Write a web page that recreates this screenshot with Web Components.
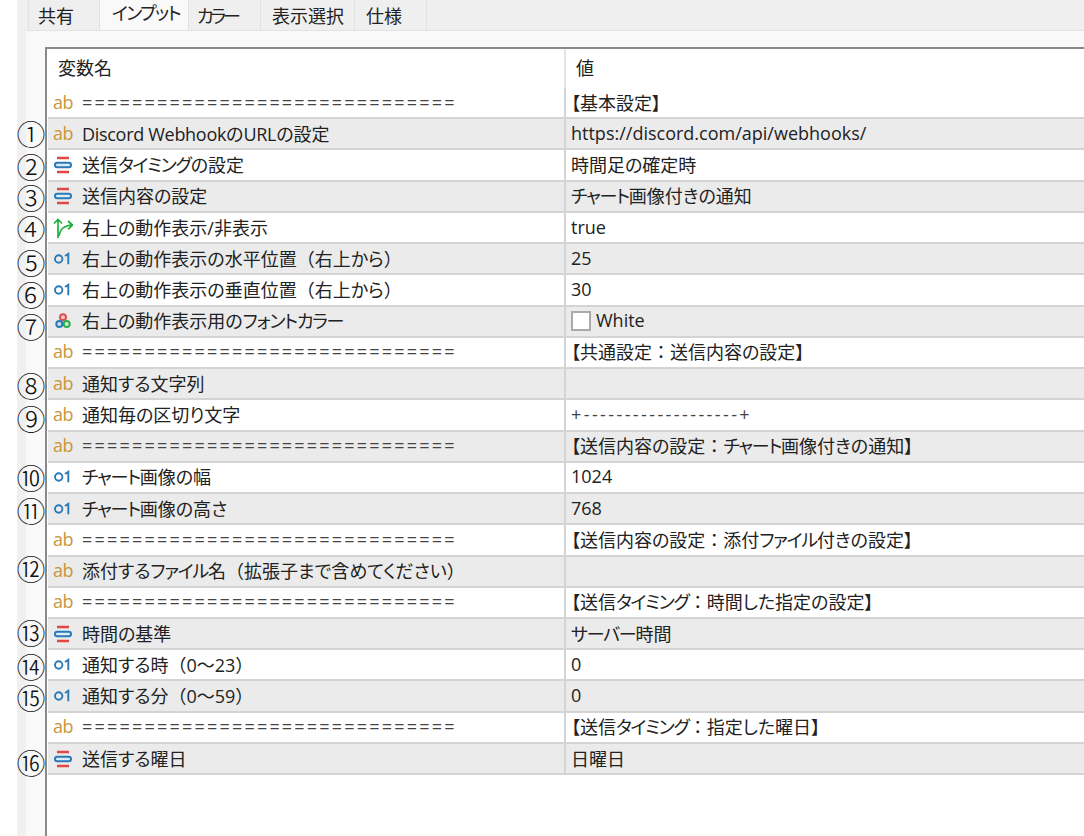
<!DOCTYPE html>
<html>
<head>
<meta charset="utf-8">
<style>
  html, body { margin: 0; padding: 0; background: #fff; }
  body { width: 1084px; height: 836px; overflow: hidden; font-family: "Open Sans", "Noto Sans CJK JP", sans-serif; }
</style>
</head>
<body>
<input-window>
  <input-row type="ab" name="==============================" value="【基本設定】"></input-row>
  <input-row type="ab" mark="①" dy="-1" name="Discord WebhookのURLの設定" value="https://discord.com/api/webhooks/"></input-row>
  <input-row type="enum" mark="②" dy="1" name="送信タイミングの設定" value="時間足の確定時"></input-row>
  <input-row type="enum" mark="③" dy="1" name="送信内容の設定" value="チャート画像付きの通知"></input-row>
  <input-row type="bool" mark="④" dy="1" name="右上の動作表示/非表示" value="true"></input-row>
  <input-row type="num" mark="⑤" dy="3" name="右上の動作表示の水平位置（右上から）" value="25"></input-row>
  <input-row type="num" mark="⑥" dy="4" name="右上の動作表示の垂直位置（右上から）" value="30"></input-row>
  <input-row type="color" mark="⑦" dy="5" name="右上の動作表示用のフォントカラー" value="White" swatch></input-row>
  <input-row type="ab" name="==============================" value="【共通設定：送信内容の設定】"></input-row>
  <input-row type="ab" mark="⑧" dy="1" name="通知する文字列" value=""></input-row>
  <input-row type="ab" mark="⑨" dy="3" name="通知毎の区切り文字" value="+-------------------+"></input-row>
  <input-row type="ab" name="==============================" value="【送信内容の設定：チャート画像付きの通知】"></input-row>
  <input-row type="num" mark="⑩" name="チャート画像の幅" value="1024"></input-row>
  <input-row type="num" mark="⑪" dy="1" name="チャート画像の高さ" value="768"></input-row>
  <input-row type="ab" name="==============================" value="【送信内容の設定：添付ファイル付きの設定】"></input-row>
  <input-row type="ab" mark="⑫" dy="-3" name="添付するファイル名（拡張子まで含めてください）" value=""></input-row>
  <input-row type="ab" name="==============================" value="【送信タイミング：時間した指定の設定】"></input-row>
  <input-row type="enum" mark="⑬" dy="-1" name="時間の基準" value="サーバー時間"></input-row>
  <input-row type="num" mark="⑭" dy="1" name="通知する時（0～23）" value="0"></input-row>
  <input-row type="num" mark="⑮" dy="1" name="通知する分（0～59）" value="0"></input-row>
  <input-row type="ab" name="==============================" value="【送信タイミング：指定した曜日】"></input-row>
  <input-row type="enum" mark="⑯" dy="4" name="送信する曜日" value="日曜日"></input-row>
</input-window>
<script>
const ICONS = {
  ab: `<span class="ab">ab</span>`,
  enum: `<svg width="18" height="18" viewBox="0 0 18 18" fill="none">
    <path d="M3 2h12M3 16h12" stroke="#e04848" stroke-width="2.4"/>
    <rect x="1" y="6.700" width="16" height="4.600" rx="2.300" fill="#dcecf7" stroke="#2a7ab8" stroke-width="2"/></svg>`,
  bool: `<svg width="20" height="20" viewBox="0 0 20 20" fill="none" stroke="#1fae3c" stroke-width="1.700">
    <path d="M5 20V1.500M1 5.500l4-4 4 4"/><path d="M6 18C7 11 11 7.500 19 7M15 3l4.500 4-4.500 4.300"/></svg>`,
  num: `<svg width="18" height="18" viewBox="0 0 18 18" fill="none" stroke="#2a7ab8" stroke-width="1.900">
    <circle cx="4.700" cy="9" r="3.700"/>
    <path d="M11 6 14.300 3.800V14.300"/></svg>`,
  color: `<svg width="18" height="18" viewBox="0 0 18 18" fill="none" stroke-width="2">
    <circle cx="9" cy="5.300" r="3" fill="#f3c6c4" stroke="#d9534f"/>
    <circle cx="5.300" cy="12" r="3" fill="#c8dff0" stroke="#2a7ab8"/>
    <circle cx="12.700" cy="12" r="3" fill="#c9eed2" stroke="#2fae4a"/></svg>`,
};

// the reference font has narrow katakana but full width punctuation
const fit = (text) => text.replace(/[ァ-ヶー]+|[（）：]/g, (m) =>
  `<span class="${/[（）：]/.test(m) ? "full" : "kata"}">${m}</span>`);

// labels also have latin words that run a little tighter than the values
const fitLabel = (text) => fit(text.replace(/[A-Za-z ]{2,}/g, (m) => `\u0001${m}\u0002`))
  .replace(/\u0001/g, `<span class="lat">`).replace(/\u0002/g, `</span>`);

class InputRow extends HTMLElement {
  connectedCallback() {
    const type = this.getAttribute("type");
    const mark = this.getAttribute("mark");
    const name = this.getAttribute("name");
    const value = this.getAttribute("value");
    const dy = this.getAttribute("dy") || 0;
    const swatch = this.hasAttribute("swatch") ? `<i class="swatch"></i>` : "";
    const root = this.attachShadow({ mode: "open" });
    root.innerHTML = `
      <style>
        :host {
          display: grid;
          grid-template-columns: 516px 1fr;
          height: 31.24px;
          box-sizing: border-box;
          position: relative;
          font-size: 18px;
          font-feature-settings: "palt";
          color: #222;
          border-bottom: 2px solid #d4d4d4;
        }
        :host(:nth-child(even)) { background: #ebebeb; }
        .name, .value { display: flex; align-items: center; white-space: nowrap; overflow: hidden; padding-bottom: 2px; }
        .name { padding-left: 5px; gap: 9px; }
        .value { padding-left: 5px; gap: 5px; border-left: 2px solid #d4d4d4; }
        .icon { width: 20px; display: flex; justify-content: center; flex: none; margin-top: 2px; }
        .ab { color: #c8963c; font-size: 18px; line-height: 18px; letter-spacing: -.5px; margin-top: -2px; }
        .swatch { width: 20px; height: 20px; background: #fff; border: 2px solid #aaa; box-sizing: border-box; margin-top: 2px; }
        .rule { letter-spacing: 2.2px; color: #444; }
        .dash { letter-spacing: 2.4px; color: #444; }
        .kata { letter-spacing: -1.2px; }
        .full { font-feature-settings: normal; }
        .lat { letter-spacing: -.3px; }
        .mark {
          position: absolute;
          left: -31px;
          top: ${dy}px;
          width: 28px;
          height: 30px;
          display: flex;
          align-items: center;
          justify-content: center;
          font: 300 29px/29px "Noto Sans CJK JP", sans-serif;
          font-feature-settings: normal;
          color: #111;
        }
      </style>
      ${mark ? `<span class="mark">${mark}</span>` : ""}
      <div class="name"><span class="icon">${ICONS[type]}</span><span class="${name[0] == "=" ? "rule" : ""}">${fitLabel(name)}</span></div>
      <div class="value">${swatch}<span class="${value[0] == "+" ? "dash" : ""}">${fit(value)}</span></div>`;
  }
}

class InputWindow extends HTMLElement {
  connectedCallback() {
    // label, tab width, text inset, letter spacing
    const tabs = [["共有", 72, 9, 0], ["インプット", 89, 12, -1.6], ["カラー", 72, 8, -3], ["表示選択", 94, 11, 0], ["仕様", 72, 11, 0]];
    const root = this.attachShadow({ mode: "open" });
    root.innerHTML = `
      <style>
        :host { display: block; height: 836px; padding-left: 17px; box-sizing: border-box; }
        .frame { height: 100%; border-left: 9px solid #f0f0f0; background: #f9f9f9; display: flex; flex-direction: column; }
        .tabs { display: flex; height: 31px; padding-left: 2px; background: #efefef; border-bottom: 1px solid #e3e3e3; box-sizing: border-box; flex: none; font-size: 18px; font-feature-settings: "palt"; color: #222; }
        .tab { display: flex; align-items: center; padding-bottom: 1px; border-right: 1px solid #e2e2e2; box-sizing: border-box; white-space: nowrap; }
        .tab:first-child { border-left: 1px solid #e2e2e2; }
        .tab.on { background: #f9f9f9; height: 31px; align-items: flex-start; margin-top: -1px; }
        .body { flex: 1; padding: 16px 0 0 19px; min-height: 0; }
        .grid { height: 100%; background: #fff; border-top: 2px solid #8a8a8a; border-left: 2px solid #8a8a8a; padding-left: 1px; }
        .head {
          display: grid; grid-template-columns: 516px 1fr; height: 39px; font-size: 18px; color: #222;
        }
        .head div { display: flex; align-items: center; padding: 0 0 3px 10px; }
        .head div + div { border-left: 2px solid #e4e4e4; }
      </style>
      <div class="frame">
        <div class="tabs">${tabs.map(([t, w, p, ls], i) => `<div class="tab ${i == 1 ? "on" : ""}" style="width:${w}px;padding-left:${p}px;letter-spacing:${ls}px">${t}</div>`).join("")}</div>
        <div class="body"><div class="grid">
          <div class="head"><div>変数名</div><div>値</div></div>
          <slot></slot>
        </div></div>
      </div>`;
  }
}

customElements.define("input-row", InputRow);
customElements.define("input-window", InputWindow);
</script>
</body>
</html>
